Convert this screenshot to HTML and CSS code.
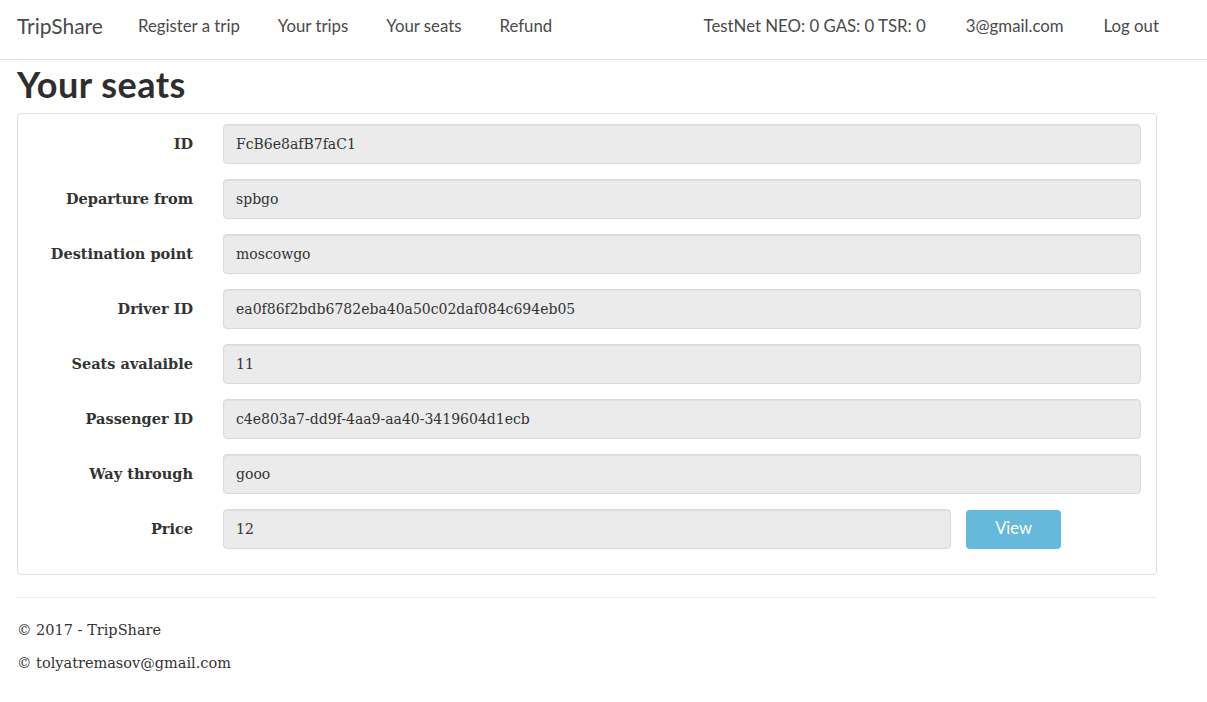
FILE: index.html
```html
<!DOCTYPE html>
<html lang="en">
<head>
<meta charset="utf-8">
<title>Your seats - TripShare</title>
<link rel="stylesheet" href="styles.css">
</head>
<body>
<header class="navbar">
  <div class="nav-inner">
    <a class="brand" href="#">TripShare</a>
    <ul class="nav nav-left">
      <li><a href="#">Register a trip</a></li>
      <li><a href="#">Your trips</a></li>
      <li><a href="#">Your seats</a></li>
      <li><a href="#">Refund</a></li>
    </ul>
    <ul class="nav nav-right">
      <li><span class="balance">TestNet NEO: 0 GAS: 0 TSR: 0</span></li>
      <li><a href="#">3@gmail.com</a></li>
      <li><a href="#">Log out</a></li>
    </ul>
  </div>
</header>
<main class="container">
  <h1 class="title">Your seats</h1>
  <div class="panel">
    <form class="form">
      <div class="form-row"><label class="label">ID</label><input class="input" readonly value="FcB6e8afB7faC1"></div>
      <div class="form-row"><label class="label">Departure from</label><input class="input" readonly value="spbgo"></div>
      <div class="form-row"><label class="label">Destination point</label><input class="input" readonly value="moscowgo"></div>
      <div class="form-row"><label class="label">Driver ID</label><input class="input" readonly value="ea0f86f2bdb6782eba40a50c02daf084c694eb05"></div>
      <div class="form-row"><label class="label">Seats avalaible</label><input class="input" readonly value="11"></div>
      <div class="form-row"><label class="label">Passenger ID</label><input class="input" readonly value="c4e803a7-dd9f-4aa9-aa40-3419604d1ecb"></div>
      <div class="form-row"><label class="label">Way through</label><input class="input" readonly value="gooo"></div>
      <div class="form-row"><label class="label">Price</label><input class="input input-short" readonly value="12"><button type="button" class="btn">View</button></div>
    </form>
  </div>
  <footer class="footer">
    <p>© 2017 - TripShare</p>
    <p>© tolyatremasov@gmail.com</p>
  </footer>
</main>
</body>
</html>
```

FILE: styles.css
```css
* { box-sizing: border-box; }
html, body { margin: 0; padding: 0; background: #fff; }
body {
  font-family: "DejaVu Serif", "Liberation Serif", serif;
  font-size: 14px;
  line-height: 1.42857;
  color: #333;
}
a { text-decoration: none; color: inherit; }

.navbar {
  height: 60px;
  border-bottom: 1px solid #ddd;
}
.nav-inner {
  display: flex;
  align-items: center;
  height: 59px;
  padding-left: 17px;
  width: 1174px;
  font-family: "Lato", "Open Sans", sans-serif;
  color: #4a4a4a;
}
.brand {
  font-size: 21px;
  color: #4a4a4a;
  padding-bottom: 8px;
  margin-right: 35px;
}
.nav {
  list-style: none;
  margin: 0;
  padding: 0;
  display: flex;
  font-size: 16.8px;
  padding-bottom: 8px;
}
.nav-left { gap: 38px; }
.nav-right { margin-left: auto; gap: 40px; padding-right: 15px; }

.container {
  width: 1140px;
  margin-left: 17px;
}
.title {
  font-family: "Lato", "Open Sans", sans-serif;
  font-weight: 700;
  font-size: 36px;
  letter-spacing: 0.5px;
  line-height: 40px;
  margin: 4px 0 9px;
  color: #2e2e2e;
}
.panel {
  border: 1px solid #ddd;
  border-radius: 4px;
  padding: 10px 15px;
}
.form-row {
  display: flex;
  align-items: center;
  margin-bottom: 15px;
}
.label {
  width: 160px;
  margin-right: 30px;
  text-align: right;
  font-weight: 700;
  font-size: 14.5px;
}
.input {
  width: 918px;
  height: 40px;
  padding: 0 12px;
  border: 1px solid #dadada;
  border-radius: 4px;
  background: #ebebeb;
  font-family: "DejaVu Serif", "Liberation Serif", serif;
  font-size: 14px;
  color: #333;
  box-shadow: inset 0 1px 1px rgba(0,0,0,0.05);
  outline: none;
}
.input-short { width: 728px; }
.btn {
  margin-left: 15px;
  width: 95px;
  height: 39px;
  border: none;
  border-radius: 4px;
  background: #65b9da;
  color: #fff;
  font-family: "Lato", "Open Sans", sans-serif;
  font-size: 16.5px;
  padding-bottom: 3px;
}
.footer {
  margin-top: 22px;
  border-top: 1px solid #eee;
  padding-top: 21px;
}
.footer p {
  margin: 0 0 10px;
  font-size: 14.5px;
  line-height: 23px;
}
```
